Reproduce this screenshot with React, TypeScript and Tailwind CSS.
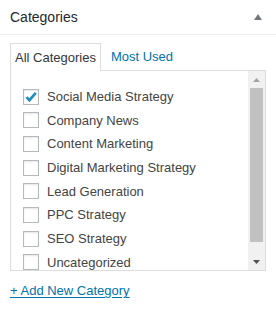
import React from "react";

const categories = [
  { name: "Social Media Strategy", checked: true },
  { name: "Company News", checked: false },
  { name: "Content Marketing", checked: false },
  { name: "Digital Marketing Strategy", checked: false },
  { name: "Lead Generation", checked: false },
  { name: "PPC Strategy", checked: false },
  { name: "SEO Strategy", checked: false },
  { name: "Uncategorized", checked: false },
];

function Checkbox({ checked }: { checked: boolean }) {
  return (
    <span className="flex h-4 w-4 shrink-0 items-center justify-center border border-[#b4b9be] bg-white shadow-[inset_0_1px_2px_rgba(0,0,0,0.1)]">
      {checked && (
        <svg width="14" height="14" viewBox="0 0 14 14">
          <path d="M2.5 7.2 L5.4 10.2 L11.8 2.8" fill="none" stroke="#1e8cbe" strokeWidth="2.6" />
        </svg>
      )}
    </span>
  );
}

export default function App() {
  return (
    <div className="h-[313px] w-[276px] bg-white font-['Liberation_Sans',Arial,sans-serif] text-[13px]">
      {/* header */}
      <div className="flex h-[35px] items-center justify-between border-b border-[#eee] pl-[10px] pr-[14px]">
        <h2 className="text-[14px] text-[#23282d]">Categories</h2>
        <svg width="8" height="6" viewBox="0 0 8 6">
          <path d="M4 0 L8 6 L0 6 Z" fill="#72777c" />
        </svg>
      </div>

      <div className="px-[10px] pt-[8px]">
        {/* tabs */}
        <div className="flex h-[27px] items-stretch">
          <div className="relative z-10 -mb-px flex items-center border border-b-0 border-[#ddd] bg-white px-[4px] text-[#32373c]">
            All Categories
          </div>
          <div className="flex items-center px-[10px] text-[#0073aa]">Most Used</div>
        </div>

        {/* panel */}
        <div className="flex h-[201px] border border-[#ddd] bg-white">
          <ul className="flex-1 overflow-hidden pl-[12px] pt-[14px]">
            {categories.map((c) => (
              <li key={c.name} className="flex h-[23.65px] items-center gap-[8px] text-[#444]">
                <Checkbox checked={c.checked} />
                <span>{c.name}</span>
              </li>
            ))}
          </ul>
          <div className="flex w-[17px] flex-col bg-[#f1f1f1]">
            <div className="flex h-[17px] items-center justify-center">
              <svg width="7" height="4" viewBox="0 0 7 4">
                <path d="M3.5 0 L7 4 L0 4 Z" fill="#a3a3a3" />
              </svg>
            </div>
            <div className="mx-[2px] h-[154px] bg-[#c1c1c1]" />
            <div className="flex-1" />
            <div className="flex h-[17px] items-center justify-center">
              <svg width="7" height="4" viewBox="0 0 7 4">
                <path d="M0 0 L7 0 L3.5 4 Z" fill="#505050" />
              </svg>
            </div>
          </div>
        </div>

        <div className="pt-[11px] leading-[18px]">
          <a className="text-[13px] text-[#0073aa] underline underline-offset-2">+ Add New Category</a>
        </div>
      </div>
    </div>
  );
}
